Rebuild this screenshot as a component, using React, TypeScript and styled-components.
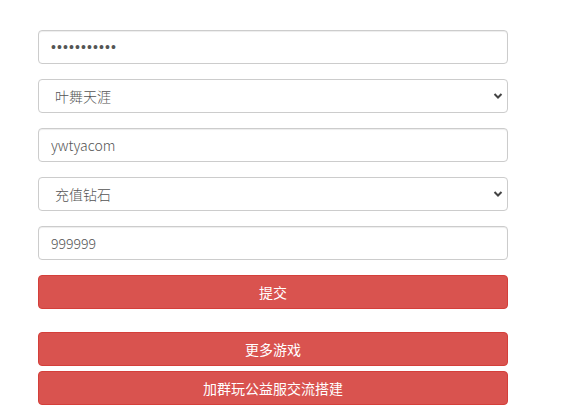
import React from 'react';
import styled, { createGlobalStyle } from 'styled-components';

const GlobalStyle = createGlobalStyle`
  html, body {
    margin: 0;
    padding: 0;
    background: #ffffff;
    font-family: "Noto Sans CJK SC", "Noto Sans", sans-serif;
  }
`;

const Page = styled.div`
  padding: 30px 0 0 38px;
`;

const Form = styled.form`
  width: 470px;
  display: flex;
  flex-direction: column;
`;

const Field = styled.div`
  position: relative;
  margin-bottom: 15px;
`;

const TextInput = styled.input<{ $dots?: boolean }>`
  box-sizing: border-box;
  display: block;
  width: 100%;
  height: 34px;
  padding: 0 12px;
  font-family: ${(p) =>
    p.$dots ? '"Liberation Sans", Arial, sans-serif' : '"Noto Sans CJK SC", "Noto Sans", sans-serif'};
  font-size: 14px;
  font-weight: 300;
  letter-spacing: ${(p) => (p.$dots ? '1.1px' : 'normal')};
  color: #555;
  background: #fff;
  border: 1px solid #ccc;
  border-radius: 4px;
  outline: none;
  box-shadow: inset 0 1px 1px rgba(0, 0, 0, 0.075);
`;

const Select = styled.select`
  box-sizing: border-box;
  display: block;
  width: 100%;
  height: 34px;
  padding: 0 30px 0 16px;
  font-family: "Noto Sans CJK SC", "Noto Sans", sans-serif;
  font-size: 14px;
  font-weight: 300;
  color: #555;
  background: #fff;
  border: 1px solid #ccc;
  border-radius: 4px;
  outline: none;
  appearance: none;
  -webkit-appearance: none;
`;

const Chevron = styled.svg`
  position: absolute;
  right: 5px;
  top: 13px;
  width: 10px;
  height: 8px;
  pointer-events: none;
`;

const Button = styled.button<{ $gap: number }>`
  box-sizing: border-box;
  display: block;
  width: 100%;
  height: 34px;
  margin-bottom: ${(p) => p.$gap}px;
  font-family: "Noto Sans CJK SC", "Noto Sans", sans-serif;
  font-size: 14px;
  color: #fff;
  background: #d9534f;
  border: 1px solid #d43f3a;
  border-radius: 4px;
  cursor: pointer;
`;

const SelectField: React.FC<{ value: string }> = ({ value }) => (
  <Field>
    <Select defaultValue={value}>
      <option value={value}>{value}</option>
    </Select>
    <Chevron viewBox="0 0 10 8">
      <path d="M1.5 2 L5 5.5 L8.5 2" fill="none" stroke="#444" strokeWidth="2" />
    </Chevron>
  </Field>
);

export default function App() {
  return (
    <Page>
      <GlobalStyle />
      <Form onSubmit={(e) => e.preventDefault()}>
        <Field>
          <TextInput type="password" $dots defaultValue="12345678901" />
        </Field>
        <SelectField value="叶舞天涯" />
        <Field>
          <TextInput type="text" defaultValue="ywtyacom" />
        </Field>
        <SelectField value="充值钻石" />
        <Field>
          <TextInput type="text" defaultValue="999999" />
        </Field>
        <Button type="submit" $gap={23}>提交</Button>
        <Button type="button" $gap={5}>更多游戏</Button>
        <Button type="button" $gap={0}>加群玩公益服交流搭建</Button>
      </Form>
    </Page>
  );
}
